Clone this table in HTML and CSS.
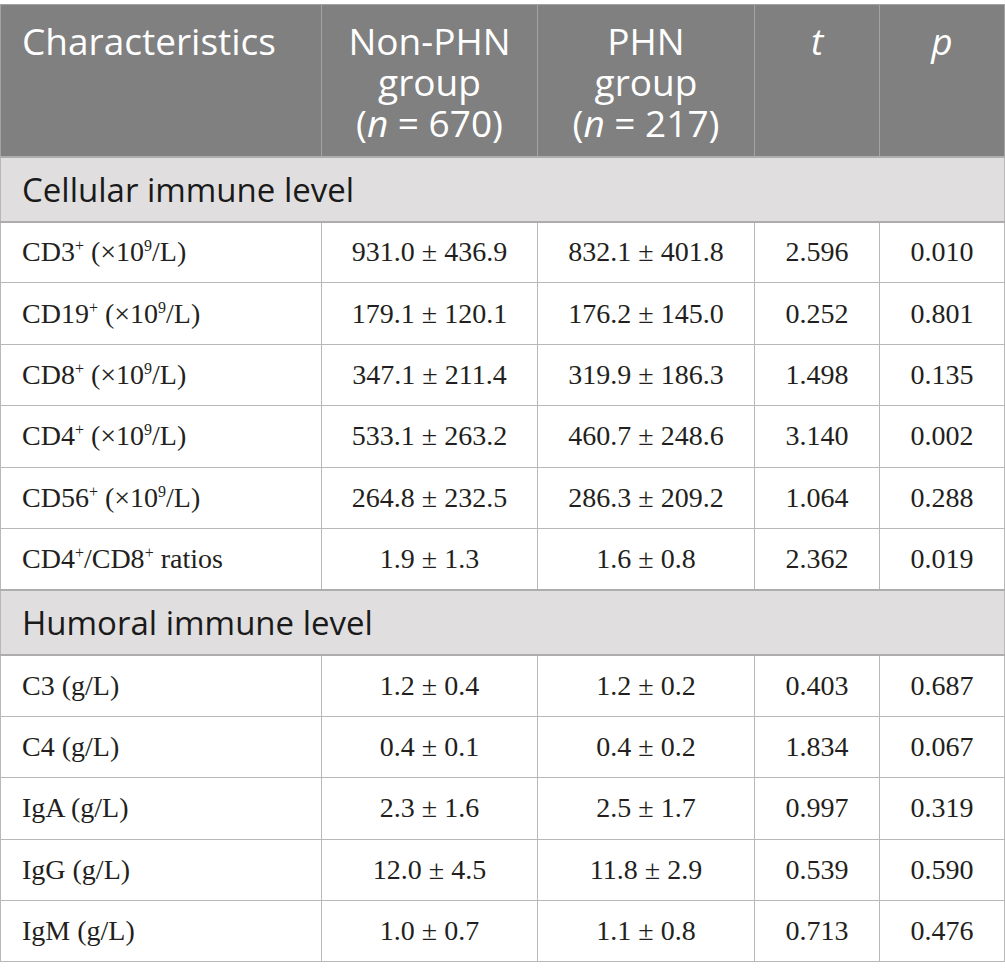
FILE: index.html
```html
<!DOCTYPE html>
<html>
<head>
<meta charset="utf-8">
<link rel="stylesheet" href="styles.css">
</head>
<body>
<table class="tbl">
  <colgroup>
    <col class="c1"><col class="c2"><col class="c3"><col class="c4"><col class="c5">
  </colgroup>
  <thead>
    <tr>
      <th class="left">Characteristics</th>
      <th>Non-PHN<br>group<br>(<i>n</i> = 670)</th>
      <th>PHN<br>group<br>(<i>n</i> = 217)</th>
      <th><i>t</i></th>
      <th><i>p</i></th>
    </tr>
  </thead>
  <tbody>
    <tr class="sec"><td colspan="5">Cellular immune level</td></tr>
    <tr><td class="left">CD3<sup>+</sup> (×10<sup>9</sup>/L)</td><td>931.0 ± 436.9</td><td>832.1 ± 401.8</td><td>2.596</td><td>0.010</td></tr>
    <tr><td class="left">CD19<sup>+</sup> (×10<sup>9</sup>/L)</td><td>179.1 ± 120.1</td><td>176.2 ± 145.0</td><td>0.252</td><td>0.801</td></tr>
    <tr><td class="left">CD8<sup>+</sup> (×10<sup>9</sup>/L)</td><td>347.1 ± 211.4</td><td>319.9 ± 186.3</td><td>1.498</td><td>0.135</td></tr>
    <tr><td class="left">CD4<sup>+</sup> (×10<sup>9</sup>/L)</td><td>533.1 ± 263.2</td><td>460.7 ± 248.6</td><td>3.140</td><td>0.002</td></tr>
    <tr><td class="left">CD56<sup>+</sup> (×10<sup>9</sup>/L)</td><td>264.8 ± 232.5</td><td>286.3 ± 209.2</td><td>1.064</td><td>0.288</td></tr>
    <tr><td class="left">CD4<sup>+</sup>/CD8<sup>+</sup> ratios</td><td>1.9 ± 1.3</td><td>1.6 ± 0.8</td><td>2.362</td><td>0.019</td></tr>
    <tr class="sec"><td colspan="5">Humoral immune level</td></tr>
    <tr><td class="left">C3 (g/L)</td><td>1.2 ± 0.4</td><td>1.2 ± 0.2</td><td>0.403</td><td>0.687</td></tr>
    <tr><td class="left">C4 (g/L)</td><td>0.4 ± 0.1</td><td>0.4 ± 0.2</td><td>1.834</td><td>0.067</td></tr>
    <tr><td class="left">IgA (g/L)</td><td>2.3 ± 1.6</td><td>2.5 ± 1.7</td><td>0.997</td><td>0.319</td></tr>
    <tr><td class="left">IgG (g/L)</td><td>12.0 ± 4.5</td><td>11.8 ± 2.9</td><td>0.539</td><td>0.590</td></tr>
    <tr><td class="left">IgM (g/L)</td><td>1.0 ± 0.7</td><td>1.1 ± 0.8</td><td>0.713</td><td>0.476</td></tr>
  </tbody>
</table>
</body>
</html>
```

FILE: styles.css
```css
html, body {
  margin: 0;
  padding: 0;
  background: #ffffff;
}
body {
  padding-top: 4px;
}
.tbl {
  border-collapse: collapse;
  table-layout: fixed;
  width: 1004px;
  font-family: "Liberation Serif", "Times New Roman", serif;
  font-size: 28px;
  color: #231f20;
}
.c1 { width: 321px; }
.c2 { width: 216px; }
.c3 { width: 217px; }
.c4 { width: 125px; }
.c5 { width: 125px; }
.tbl th {
  background: #7f807f;
  color: #ffffff;
  font-family: "Open Sans", "Noto Sans", sans-serif;
  font-weight: 400;
  font-size: 37px;
  line-height: 41px;
  text-align: center;
  vertical-align: top;
  height: 152px;
  padding: 15px 0 0 0;
  box-sizing: border-box;
  border: 1px solid #a3a3a3;
}
.tbl th.left,
.tbl td.left {
  text-align: left;
  padding-left: 21px;
}
.tbl td {
  height: 61.4px;
  padding: 0;
  text-align: center;
  vertical-align: middle;
  border: 1px solid #b8b8b8;
  box-sizing: border-box;
}
.tbl sup {
  font-size: 16px;
  vertical-align: 10px;
  line-height: 0;
}
.tbl tr.sec td {
  background: #e0dedf;
  border-top: 2px solid #adadad;
  border-bottom: 2px solid #adadad;
  font-family: "Open Sans", "Noto Sans", sans-serif;
  font-size: 33px;
  color: #1a1a1a;
  text-align: left;
  padding-left: 21px;
  height: 65px;
}
```
